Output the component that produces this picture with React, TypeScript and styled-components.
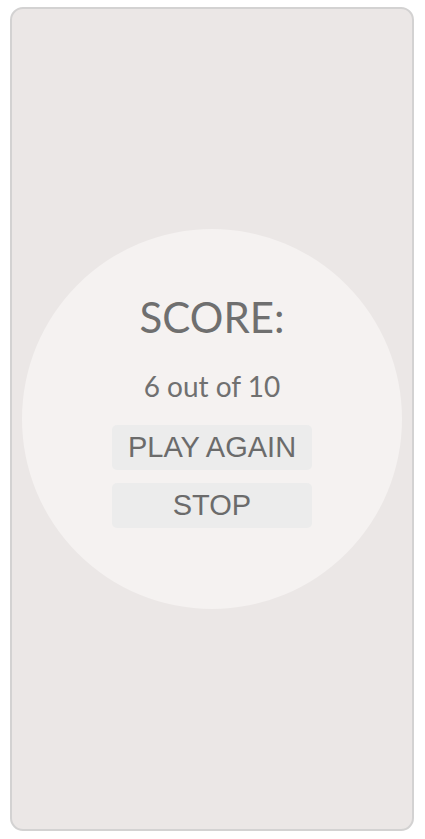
import React from "react";
import styled, { createGlobalStyle } from "styled-components";

const Global = createGlobalStyle`
  html, body { margin: 0; padding: 0; background: #ffffff; }
  body { font-family: Lato, "Noto Sans", sans-serif; }
`;

const Page = styled.div`
  padding: 7px 11px 8px 10px;
  box-sizing: border-box;
  width: 425px;
  height: 839px;
`;

const Card = styled.div`
  box-sizing: border-box;
  height: 824px;
  border: 2px solid #d3d2d2;
  border-radius: 13px;
  background: #ebe7e6;
  display: flex;
  align-items: center;
  justify-content: center;
`;

const Circle = styled.div`
  width: 380px;
  height: 380px;
  border-radius: 50%;
  background: #f5f2f1;
  display: flex;
  flex-direction: column;
  align-items: center;
  justify-content: center;
  padding-bottom: 18px;
  box-sizing: border-box;
`;

const Title = styled.h1`
  margin: 0;
  font-family: Lato, "Noto Sans", sans-serif;
  font-weight: 400;
  font-size: 42px;
  line-height: 50px;
  color: #6f6f6f;
`;

const Score = styled.p`
  margin: 27px 0 0;
  font-family: Lato, "Noto Sans", sans-serif;
  font-size: 28px;
  line-height: 34px;
  color: #707070;
`;

const Button = styled.button<{ $top: number }>`
  margin-top: ${(p) => p.$top}px;
  width: 200px;
  height: 45px;
  border: none;
  border-radius: 5px;
  background: #ececec;
  color: #6b6b6b;
  font-family: "Liberation Sans", Arial, sans-serif;
  font-size: 29px;
  padding: 0;
  cursor: pointer;
`;

export default function App() {
  return (
    <>
      <Global />
      <Page>
        <Card>
          <Circle>
            <Title>SCORE:</Title>
            <Score>6 out of 10</Score>
            <Button $top={22}>PLAY AGAIN</Button>
            <Button $top={13}>STOP</Button>
          </Circle>
        </Card>
      </Page>
    </>
  );
}
